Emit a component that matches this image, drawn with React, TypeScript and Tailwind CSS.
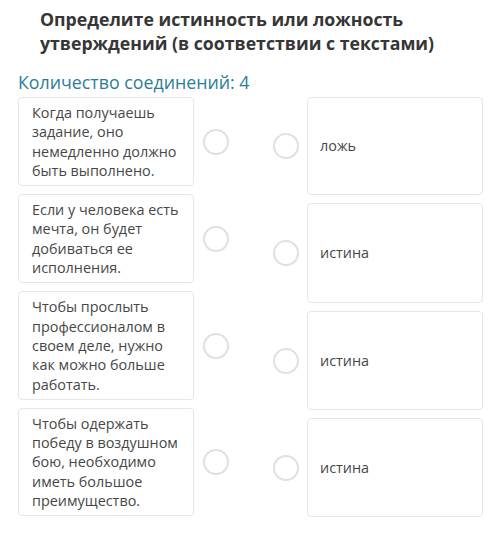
const left = [
  ["Когда получаешь", "задание, оно", "немедленно должно", "быть выполнено."],
  ["Если у человека есть", "мечта, он будет", "добиваться ее", "исполнения."],
  ["Чтобы прослыть", "профессионалом в", "своем деле, нужно", "как можно больше", "работать."],
  ["Чтобы одержать", "победу в воздушном", "бою, необходимо", "иметь большое", "преимущество."],
];

const right = ["ложь", "истина", "истина", "истина"];

function Dot() {
  return <div className="h-[26px] w-[26px] shrink-0 rounded-full border-2 border-[#e0e0e0] bg-white" />;
}

export default function App() {
  return (
    <div className="h-[540px] w-[500px] overflow-hidden bg-white font-['Open_Sans',sans-serif]">
      <div className="pl-[40px] pt-[7px] text-[17.7px] font-bold leading-[24px] text-[#363636]">
        Определите истинность или ложность
        <br />
        утверждений (в соответствии с текстами)
      </div>
      <div className="mt-[15px] pl-[18px] text-[17.8px] leading-[24px] text-[#2b7d97]">
        Количество соединений: 4
      </div>
      <div className="mt-[3px] flex">
        <div className="flex w-[229px] flex-col gap-[8px] pl-[18px]">
          {left.map((lines, i) => (
            <div key={i} className="flex items-center">
              <div className="w-[176px] shrink-0 rounded-[4px] border border-[#e6e6e6] px-[13px] py-[5px] text-[14.4px] leading-[19.3px] text-[#474747]">
                {lines.map((l, j) => (
                  <div key={j} className="whitespace-nowrap">{l}</div>
                ))}
              </div>
              <div className="ml-[9px]">
                <Dot />
              </div>
            </div>
          ))}
        </div>
        <div className="ml-[44px] flex flex-col gap-[8px]">
          {right.map((t, i) => (
            <div key={i} className="flex items-center gap-[8px]">
              <Dot />
              <div className={`flex w-[176px] items-center rounded-[4px] border border-[#e6e6e6] px-[12px] text-[14.4px] leading-[19.3px] text-[#474747] ${i === 1 ? "h-[100px]" : i === 0 ? "h-[98px]" : "h-[99px]"}`}>
                {t}
              </div>
            </div>
          ))}
        </div>
      </div>
    </div>
  );
}
